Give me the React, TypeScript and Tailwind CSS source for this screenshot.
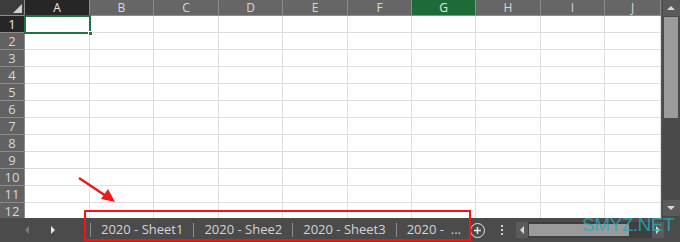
import React from 'react';

const COLS = [
  { label: 'A', w: 65 },
  { label: 'B', w: 64 },
  { label: 'C', w: 65 },
  { label: 'D', w: 64 },
  { label: 'E', w: 65 },
  { label: 'F', w: 64 },
  { label: 'G', w: 64 },
  { label: 'H', w: 65 },
  { label: 'I', w: 64 },
  { label: 'J', w: 56 },
];

const ROWS = Array.from({ length: 12 }, (_, i) => i + 1);

const TABS = ['2020 - Sheet1', '2020 - Shee2', '2020 - Sheet3', '2020 -  ...'];

function ColumnHeader({ label, w }: { label: string; w: number }) {
  const tone =
    label === 'A'
      ? 'bg-[#262626] text-[#e8e8e8]'
      : label === 'G'
        ? 'bg-[#1e6b3a] text-[#e8e8e8]'
        : 'bg-[#666666] text-[#d8d8d8]';
  return (
    <div
      className={`h-[16px] flex items-center justify-center border-r border-b border-[#8c8c8c] text-[12px] leading-[14px] ${tone}`}
      style={{ width: w }}
    >
      {label}
    </div>
  );
}

function SheetGrid() {
  return (
    <div className="relative flex-1 h-[218px] overflow-hidden bg-white">
      {/* header row */}
      <div className="flex">
        <div className="relative w-[25px] h-[16px] bg-[#3c3c3c] border-r border-b border-[#8c8c8c]">
          <div className="absolute right-[2px] bottom-[2px] w-0 h-0 border-l-[9px] border-l-transparent border-b-[9px] border-b-[#d0d0d0]" />
        </div>
        {COLS.map((c) => (
          <ColumnHeader key={c.label} label={c.label} w={c.w} />
        ))}
      </div>

      {/* rows */}
      {ROWS.map((r) => (
        <div key={r} className="flex">
          <div
            className={`w-[25px] h-[17px] flex items-center justify-center border-r border-b border-[#8c8c8c] text-[13px] leading-[15px] ${
              r === 1 ? 'bg-[#262626] text-[#e8e8e8]' : 'bg-[#626262] text-[#d6d6d6]'
            }`}
          >
            {r}
          </div>
          {COLS.map((c) => (
            <div
              key={c.label}
              className="h-[17px] border-r border-b border-[#dedede] bg-white"
              style={{ width: c.w }}
            />
          ))}
        </div>
      ))}

      {/* active cell A1 */}
      <div className="absolute left-[24px] top-[15px] w-[67px] h-[19px] border-2 border-[#217346]" />
      <div className="absolute left-[88px] top-[31px] w-[5px] h-[5px] bg-[#217346] border border-white" />
    </div>
  );
}

function VScrollbar() {
  return (
    <div className="w-[19px] h-[218px] bg-[#4a4a4a] flex flex-col items-center border-l border-[#5a5a5a]">
      <div className="w-[17px] h-[16px] bg-[#5a5a5a] flex items-center justify-center">
        <div className="w-0 h-0 border-l-[4px] border-r-[4px] border-b-[4px] border-l-transparent border-r-transparent border-b-[#d8d8d8]" />
      </div>
      <div className="w-[14px] h-[101px] mt-px bg-[#9b9b9b]" />
      <div className="flex-1" />
      <div className="w-[17px] h-[16px] mb-[2px] bg-[#5a5a5a] flex items-center justify-center">
        <div className="w-0 h-0 border-l-[4px] border-r-[4px] border-t-[4px] border-l-transparent border-r-transparent border-t-[#d8d8d8]" />
      </div>
    </div>
  );
}

function SheetBar() {
  return (
    <div className="relative h-[24px] bg-[#4b4b4b] flex items-center text-[13px] text-[#d4d4d4]">
      {/* nav arrows */}
      <div className="w-[90px] flex items-center">
        <div className="ml-[25px] w-0 h-0 border-t-[4px] border-b-[4px] border-r-[4px] border-t-transparent border-b-transparent border-r-[#7c7c7c]" />
        <div className="ml-[22px] w-0 h-0 border-t-[4px] border-b-[4px] border-l-[4px] border-t-transparent border-b-transparent border-l-[#e6e6e6]" />
      </div>

      {TABS.map((t, i) => (
        <div key={t} className="flex items-center">
          <div className="w-px h-[14px] bg-[#8a8a8a]" />
          <div className={`${i === 3 ? 'w-[73px] pl-[10px]' : 'px-[10px]'} whitespace-pre`}>{t}</div>
        </div>
      ))}

      {/* add sheet */}
      <div className="w-[15px] h-[15px] rounded-full border-[1.5px] border-[#e6e6e6] flex items-center justify-center">
        <svg width="9" height="9" viewBox="0 0 9 9">
          <path d="M4.5 1v7M1 4.5h7" stroke="#e6e6e6" strokeWidth="1.5" />
        </svg>
      </div>

      {/* split handle */}
      <div className="ml-[16px] flex flex-col gap-[2px]">
        <div className="w-[2px] h-[2px] bg-[#cfcfcf]" />
        <div className="w-[2px] h-[2px] bg-[#cfcfcf]" />
        <div className="w-[2px] h-[2px] bg-[#cfcfcf]" />
      </div>

      {/* horizontal scrollbar */}
      <div className="ml-[13px] w-[148px] h-[16px] bg-[#3f3f3f] flex items-center">
        <div className="w-[12px] h-[16px] bg-[#5a5a5a] flex items-center justify-center">
          <div className="w-0 h-0 border-t-[4px] border-b-[4px] border-r-[4px] border-t-transparent border-b-transparent border-r-[#d8d8d8]" />
        </div>
        <div className="w-[100px] h-[12px] ml-px bg-[#9b9b9b]" />
        <div className="flex-1" />
        <div className="w-[12px] h-[16px] bg-[#5a5a5a] flex items-center justify-center">
          <div className="w-0 h-0 border-t-[4px] border-b-[4px] border-l-[4px] border-t-transparent border-b-transparent border-l-[#d8d8d8]" />
        </div>
      </div>
    </div>
  );
}

export default function App() {
  return (
    <div
      className="relative w-[680px] h-[242px] overflow-hidden bg-[#4b4b4b]"
      style={{ fontFamily: '"Open Sans", "Noto Sans", sans-serif' }}
    >
      <div className="flex">
        <SheetGrid />
        <VScrollbar />
      </div>
      <SheetBar />

      {/* annotation: red box around tabs */}
      <div className="absolute left-[84px] top-[210px] w-[387px] h-[31px] border-2 border-[#ff1010]" />

      {/* annotation: red arrow */}
      <svg className="absolute left-0 top-0" width="680" height="242">
        <line x1="79" y1="178" x2="106" y2="196" stroke="#f01818" strokeWidth="2.5" />
        <polygon points="115,202 101,199 108,189" fill="#f01818" />
      </svg>

      {/* watermark */}
      <div
        className="absolute left-[582px] top-[215px] text-[19px] leading-none tracking-[-0.5px] text-[#2aa9b8] opacity-80"
        style={{ fontFamily: '"Liberation Sans", Arial, sans-serif' }}
      >
        SMYZ.NET
      </div>
    </div>
  );
}
